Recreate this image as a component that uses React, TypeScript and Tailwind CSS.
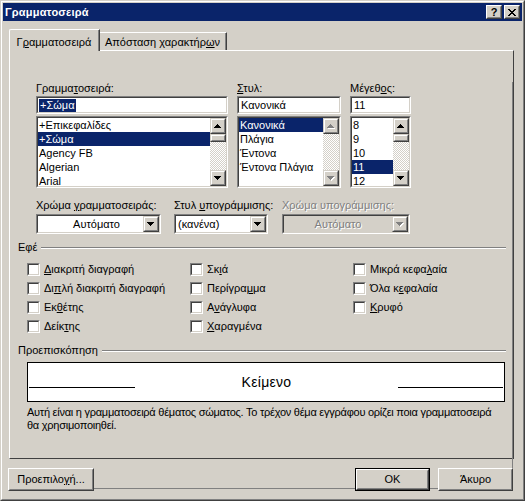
import type { ReactNode } from 'react'

const face = "font-['Liberation_Sans',Arial,sans-serif]"

function Sunken({ className = '', inner = '', children }: { className?: string; inner?: string; children?: ReactNode }) {
  return (
    <div className={`border border-t-[#808080] border-l-[#808080] border-r-white border-b-white ${className}`}>
      <div className={`h-full border border-t-[#404040] border-l-[#404040] border-r-[#d4d0c8] border-b-[#d4d0c8] ${inner}`}>
        {children}
      </div>
    </div>
  )
}

// scroll / combo buttons
function Bevel({ className = '', children }: { className?: string; children?: ReactNode }) {
  return (
    <div className={`border border-t-[#d4d0c8] border-l-[#d4d0c8] border-r-[#404040] border-b-[#404040] ${className}`}>
      <div className="h-full border border-t-white border-l-white border-r-[#808080] border-b-[#808080] bg-[#d4d0c8] flex items-center justify-center">
        {children}
      </div>
    </div>
  )
}

// push buttons
function Push({ className = '', children }: { className?: string; children?: ReactNode }) {
  return (
    <div className={`border border-t-white border-l-white border-r-[#404040] border-b-[#404040] ${className}`}>
      <div className="h-full border border-t-[#d4d0c8] border-l-[#d4d0c8] border-r-[#808080] border-b-[#808080] bg-[#d4d0c8] flex items-center justify-center">
        {children}
      </div>
    </div>
  )
}

function Arrow({ down = false, disabled = false }: { down?: boolean; disabled?: boolean }) {
  const d = down
    ? 'M0 0h7v1h-7z M1 1h5v1h-5z M2 2h3v1h-3z M3 3h1v1h-1z'
    : 'M3 0h1v1h-1z M2 1h3v1h-3z M1 2h5v1h-5z M0 3h7v1h-7z'
  return (
    <svg width="8" height="5" viewBox="0 0 8 5" shapeRendering="crispEdges">
      {disabled && <path d={d} fill="#ffffff" transform="translate(1 1)" />}
      <path d={d} fill={disabled ? '#808080' : '#000000'} />
    </svg>
  )
}

function VScroll({ thumb = 0, disabled = false }: { thumb?: number; disabled?: boolean }) {
  return (
    <div className="w-[16px] h-full flex flex-col">
      <Bevel className="h-[16px] shrink-0">
        <Arrow disabled={disabled} />
      </Bevel>
      {thumb > 0 && <Bevel className="h-[8px] shrink-0" />}
      <div className="flex-1 bg-[repeating-conic-gradient(#d4d0c8_0%_25%,#ffffff_0%_50%)] bg-[length:2px_2px]" />
      <Bevel className="h-[16px] shrink-0">
        <Arrow down disabled={disabled} />
      </Bevel>
    </div>
  )
}

function ListBox({ items, selected, thumb, disabled }: { items: string[]; selected: number; thumb?: number; disabled?: boolean }) {
  return (
    <Sunken className="h-[72px] mt-[2px]" inner="bg-white flex overflow-hidden">
      <div className="flex-1 overflow-hidden">
        {items.map((it, i) => (
          <div
            key={it}
            className={`h-[14px] leading-[14px] pl-px whitespace-nowrap ${i === selected ? 'bg-[#0a246a] text-white' : 'text-black'}`}
          >
            {it}
          </div>
        ))}
      </div>
      <VScroll thumb={thumb} disabled={disabled} />
    </Sunken>
  )
}

function Combo({ text, className, textCls, disabled = false }: { text: string; className: string; textCls: string; disabled?: boolean }) {
  return (
    <Sunken className={`h-[20px] mt-[2px] ${className}`} inner={`flex ${disabled ? 'bg-[#d4d0c8]' : 'bg-white'}`}>
      <div className={`flex-1 leading-[16px] ${textCls}`}>{text}</div>
      <Bevel className="w-[16px] h-[16px]">
        <Arrow down disabled={disabled} />
      </Bevel>
    </Sunken>
  )
}

function Check({ children }: { children: ReactNode }) {
  return (
    <div className="h-[19px] flex items-center gap-[4px] whitespace-nowrap">
      <Sunken className="w-[13px] h-[13px] shrink-0" inner="bg-white" />
      <span>{children}</span>
    </div>
  )
}

function GroupHead({ label }: { label: string }) {
  return (
    <div className="flex items-center h-[13px]">
      <span>{label}</span>
      <div className="flex-1 ml-[4px] h-[2px] border-t border-t-[#808080] border-b border-b-white" />
    </div>
  )
}

export default function App() {
  return (
    <div className={`w-[525px] h-[501px] bg-[#d4d0c8] text-[11px] leading-[13px] text-black ${face} border border-t-[#d4d0c8] border-l-[#d4d0c8] border-r-[#404040] border-b-[#404040]`}>
      <div className="h-full border border-t-white border-l-white border-r-[#808080] border-b-[#808080] p-px flex flex-col">
        {/* title bar */}
        <div className="h-[18px] bg-[#0a246a] flex items-center pl-[2px] pr-[2px]">
          <span className="text-white font-bold flex-1 tracking-[0.2px]">Γραμματοσειρά</span>
          <Push className="w-[16px] h-[14px]">
            <span className="font-bold text-[11px] leading-[10px]">?</span>
          </Push>
          <Push className="w-[16px] h-[14px] ml-[2px]">
            <svg width="8" height="7" viewBox="0 0 8 7" shapeRendering="crispEdges">
              <path d="M0 0h2v1h-2z M6 0h2v1h-2z M1 1h2v1h-2z M5 1h2v1h-2z M2 2h4v1h-4z M3 3h2v1h-2z M2 4h4v1h-4z M1 5h2v1h-2z M5 5h2v1h-2z M0 6h2v1h-2z M6 6h2v1h-2z" fill="#000" />
            </svg>
          </Push>
        </div>

        {/* tabs */}
        <div className="mt-[8px] ml-[6px] h-[21px] flex items-end">
          <div className="relative z-10 -mb-px h-[22px] w-[91px] bg-[#d4d0c8] border-l border-t border-r border-l-white border-t-white border-r-[#404040] rounded-tl-[2px]">
            <div className="h-full border-r border-r-[#808080] text-center pt-[6px]">
              Γ<u>ρ</u>αμματοσειρά
            </div>
          </div>
          <div className="h-[18px] w-[127px] border-t border-r border-t-white border-r-[#404040]">
            <div className="h-full border-r border-r-[#808080] text-center pt-[3px]">
              Απόσταση χαρακτήρ<u>ω</u>ν
            </div>
          </div>
        </div>

        {/* tab panel */}
        <div className="w-[505px] h-[409px] ml-[6px] border border-l-white border-t-white border-r-[#404040] border-b-[#404040]">
          <div className="h-full border-r border-b border-r-[#808080] border-b-[#808080] pl-[8px] pr-[6px]">
            <div className="ml-[18px] mt-[31px]">
              <div className="flex gap-[9px]">
                <div className="w-[192px]">
                  <div className="h-[13px]">Γραμμα<u>τ</u>οσειρά:</div>
                  <Sunken className="h-[18px] mt-[1px]" inner="bg-white flex items-center pl-px">
                    <span className="bg-[#0a246a] text-white leading-[13px] px-px">+Σώμα</span>
                  </Sunken>
                  <ListBox items={['+Επικεφαλίδες', '+Σώμα', 'Agency FB', 'Algerian', 'Arial']} selected={1} thumb={1} />
                </div>
                <div className="w-[104px]">
                  <div className="h-[13px]"><u>Σ</u>τυλ:</div>
                  <Sunken className="h-[18px] mt-[1px]" inner="bg-white flex items-center pl-[2px]">
                    Κανονικά
                  </Sunken>
                  <ListBox items={['Κανονικά', 'Πλάγια', 'Έντονα', 'Έντονα Πλάγια']} selected={0} disabled />
                </div>
                <div className="w-[61px]">
                  <div className="h-[13px]">Μέγεθ<u>ο</u>ς:</div>
                  <Sunken className="h-[18px] mt-[1px]" inner="bg-white flex items-center pl-[2px]">
                    11
                  </Sunken>
                  <ListBox items={['8', '9', '10', '11', '12']} selected={3} thumb={1} />
                </div>
              </div>

              <div className="flex mt-[11px]">
                <div className="w-[125px]">
                  <div className="h-[13px] whitespace-nowrap">Χρώμα <u>γ</u>ραμματοσειράς:</div>
                  <Combo text="Αυτόματο" className="w-[125px]" textCls="text-center pl-[12px]" />
                </div>
                <div className="w-[94px] ml-[13px]">
                  <div className="h-[13px] whitespace-nowrap">Στυλ <u>υ</u>πογράμμισης:</div>
                  <Combo text="(κανένα)" className="w-[94px]" textCls="pl-[2px]" />
                </div>
                <div className="w-[128px] ml-[14px]">
                  <div className="h-[13px] whitespace-nowrap text-[#808080] [text-shadow:1px_1px_0_#ffffff]">Χρώμα υπογράμμισης:</div>
                  <Combo text="Αυτόματο" className="w-[128px]" textCls="text-center text-[#808080] [text-shadow:1px_1px_0_#ffffff]" disabled />
                </div>
              </div>
            </div>

            <div className="mt-[7px]">
              <GroupHead label="Εφέ" />
            </div>

            <div className="mt-[6px] ml-[9px] flex">
              <div className="w-[163px]">
                <Check><u>Δ</u>ιακριτή διαγραφή</Check>
                <Check>Δι<u>π</u>λή διακριτή διαγραφή</Check>
                <Check>Εκ<u>θ</u>έτης</Check>
                <Check>Δείκ<u>τ</u>ης</Check>
              </div>
              <div className="w-[163px]">
                <Check>Σκ<u>ι</u>ά</Check>
                <Check>Περίγρα<u>μ</u>μα</Check>
                <Check>Α<u>ν</u>άγλυφα</Check>
                <Check><u>Χ</u>αραγμένα</Check>
              </div>
              <div>
                <Check>Μικρά κεφα<u>λ</u>αία</Check>
                <Check>Όλα κ<u>ε</u>φαλαία</Check>
                <Check><u>Κ</u>ρυφό</Check>
              </div>
            </div>

            <div className="mt-[8px]">
              <GroupHead label="Προεπισκόπηση" />
            </div>

            <div className="mt-[5px] ml-[9px] w-[478px] h-[40px] bg-white border border-black flex px-px">
              <div className="w-[106px] h-px bg-black mt-[24px]" />
              <div className="flex-1 text-center text-[14px] leading-[38px] tracking-[0.3px]">Κείμενο</div>
              <div className="w-[105px] h-px bg-black mt-[24px]" />
            </div>

            <div className="mt-[4px] ml-[9px] whitespace-nowrap tracking-[-0.25px]">
              Αυτή είναι η γραμματοσειρά θέματος σώματος. Το τρέχον θέμα εγγράφου ορίζει ποια γραμματοσειρά
              <br />
              θα χρησιμοποιηθεί.
            </div>
          </div>
        </div>

        {/* buttons */}
        <div className="mt-[9px] flex h-[23px]">
          <Push className="ml-[5px] w-[86px] h-[23px]">
            <span>Προεπιλο<u>γ</u>ή...</span>
          </Push>
          <div className="ml-auto w-[75px] h-[23px] border border-black">
            <Push className="h-full">
              <span>OK</span>
            </Push>
          </div>
          <Push className="ml-[8px] mr-[9px] w-[75px] h-[23px]">
            <span>Άκυρο</span>
          </Push>
        </div>
      </div>
    </div>
  )
}
